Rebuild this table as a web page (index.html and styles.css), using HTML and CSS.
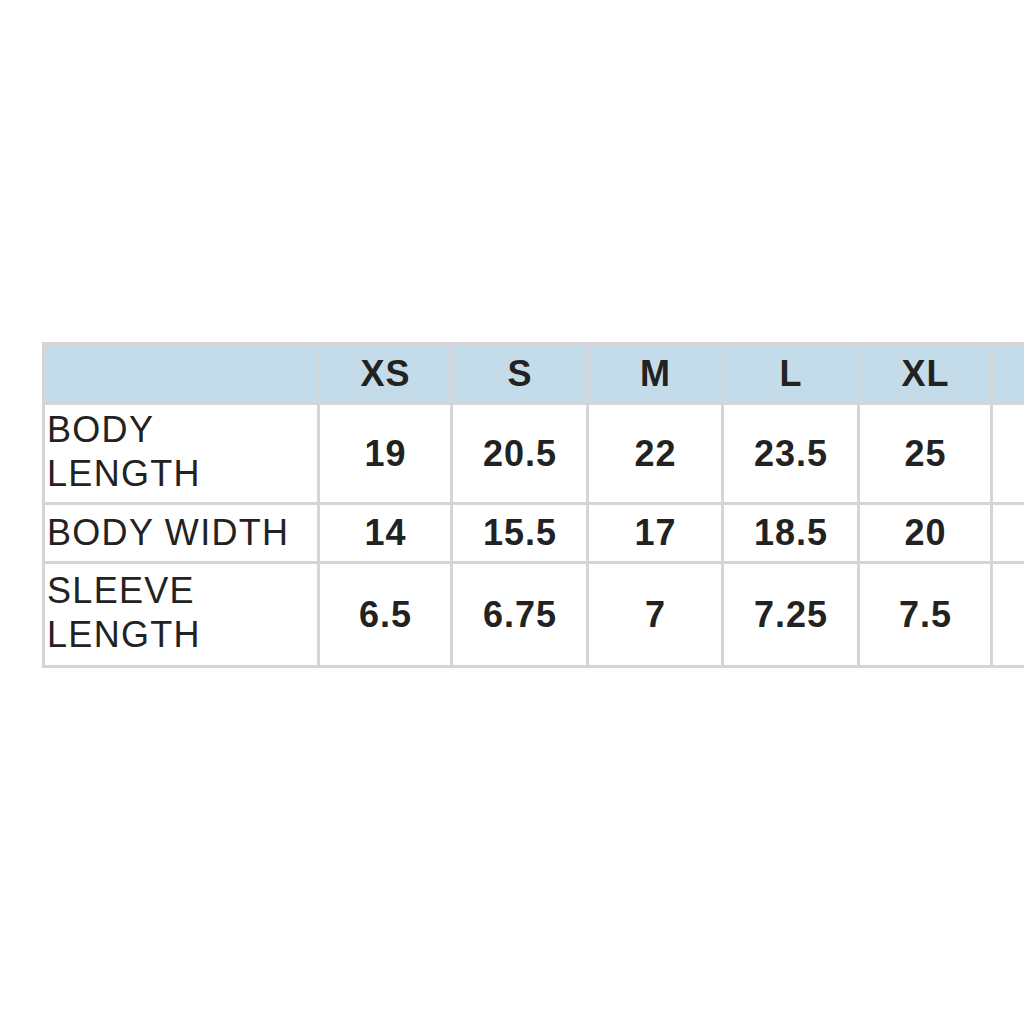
FILE: index.html
```html
<!DOCTYPE html>
<html>
<head>
<meta charset="utf-8">
<link rel="stylesheet" href="styles.css">
<title>Size chart</title>
</head>
<body>
<div class="page">
  <div class="chart">
    <div class="cell head"></div>
    <div class="cell head num">XS</div>
    <div class="cell head num">S</div>
    <div class="cell head num">M</div>
    <div class="cell head num">L</div>
    <div class="cell head num">XL</div>
    <div class="cell head num"></div>

    <div class="cell label two">BODY<br>LENGTH</div>
    <div class="cell num">19</div>
    <div class="cell num">20.5</div>
    <div class="cell num">22</div>
    <div class="cell num">23.5</div>
    <div class="cell num">25</div>
    <div class="cell num"></div>

    <div class="cell label">BODY WIDTH</div>
    <div class="cell num">14</div>
    <div class="cell num">15.5</div>
    <div class="cell num">17</div>
    <div class="cell num">18.5</div>
    <div class="cell num">20</div>
    <div class="cell num"></div>

    <div class="cell label two">SLEEVE<br>LENGTH</div>
    <div class="cell num">6.5</div>
    <div class="cell num">6.75</div>
    <div class="cell num">7</div>
    <div class="cell num">7.25</div>
    <div class="cell num">7.5</div>
    <div class="cell num"></div>
  </div>
</div>
</body>
</html>
```
FILE: styles.css
```css
html, body {
  margin: 0;
  padding: 0;
  background: #ffffff;
  overflow: hidden;
}
.page {
  width: 1024px;
  height: 1024px;
  padding: 342px 0 0 42px;
  box-sizing: border-box;
  overflow: hidden;
}
.chart {
  display: inline-grid;
  grid-template-columns: 272px 130px 133px 132px 133px 130px 130px;
  grid-template-rows: 57px 97px 56px 101px;
  gap: 3px;
  padding: 3px;
  background: #d5d5d5;
  font-family: "Liberation Sans", Arial, sans-serif;
  font-size: 36px;
  color: #222222;
}
.cell {
  background: #ffffff;
  display: flex;
  align-items: center;
}
.head {
  background: #c4dcea;
}
.num {
  justify-content: center;
  font-weight: bold;
  letter-spacing: 1px;
  text-indent: 1px;
}
.label {
  padding-left: 2px;
  line-height: 44px;
  letter-spacing: 1.3px;
}
.two {
  padding-bottom: 4px;
}
```
